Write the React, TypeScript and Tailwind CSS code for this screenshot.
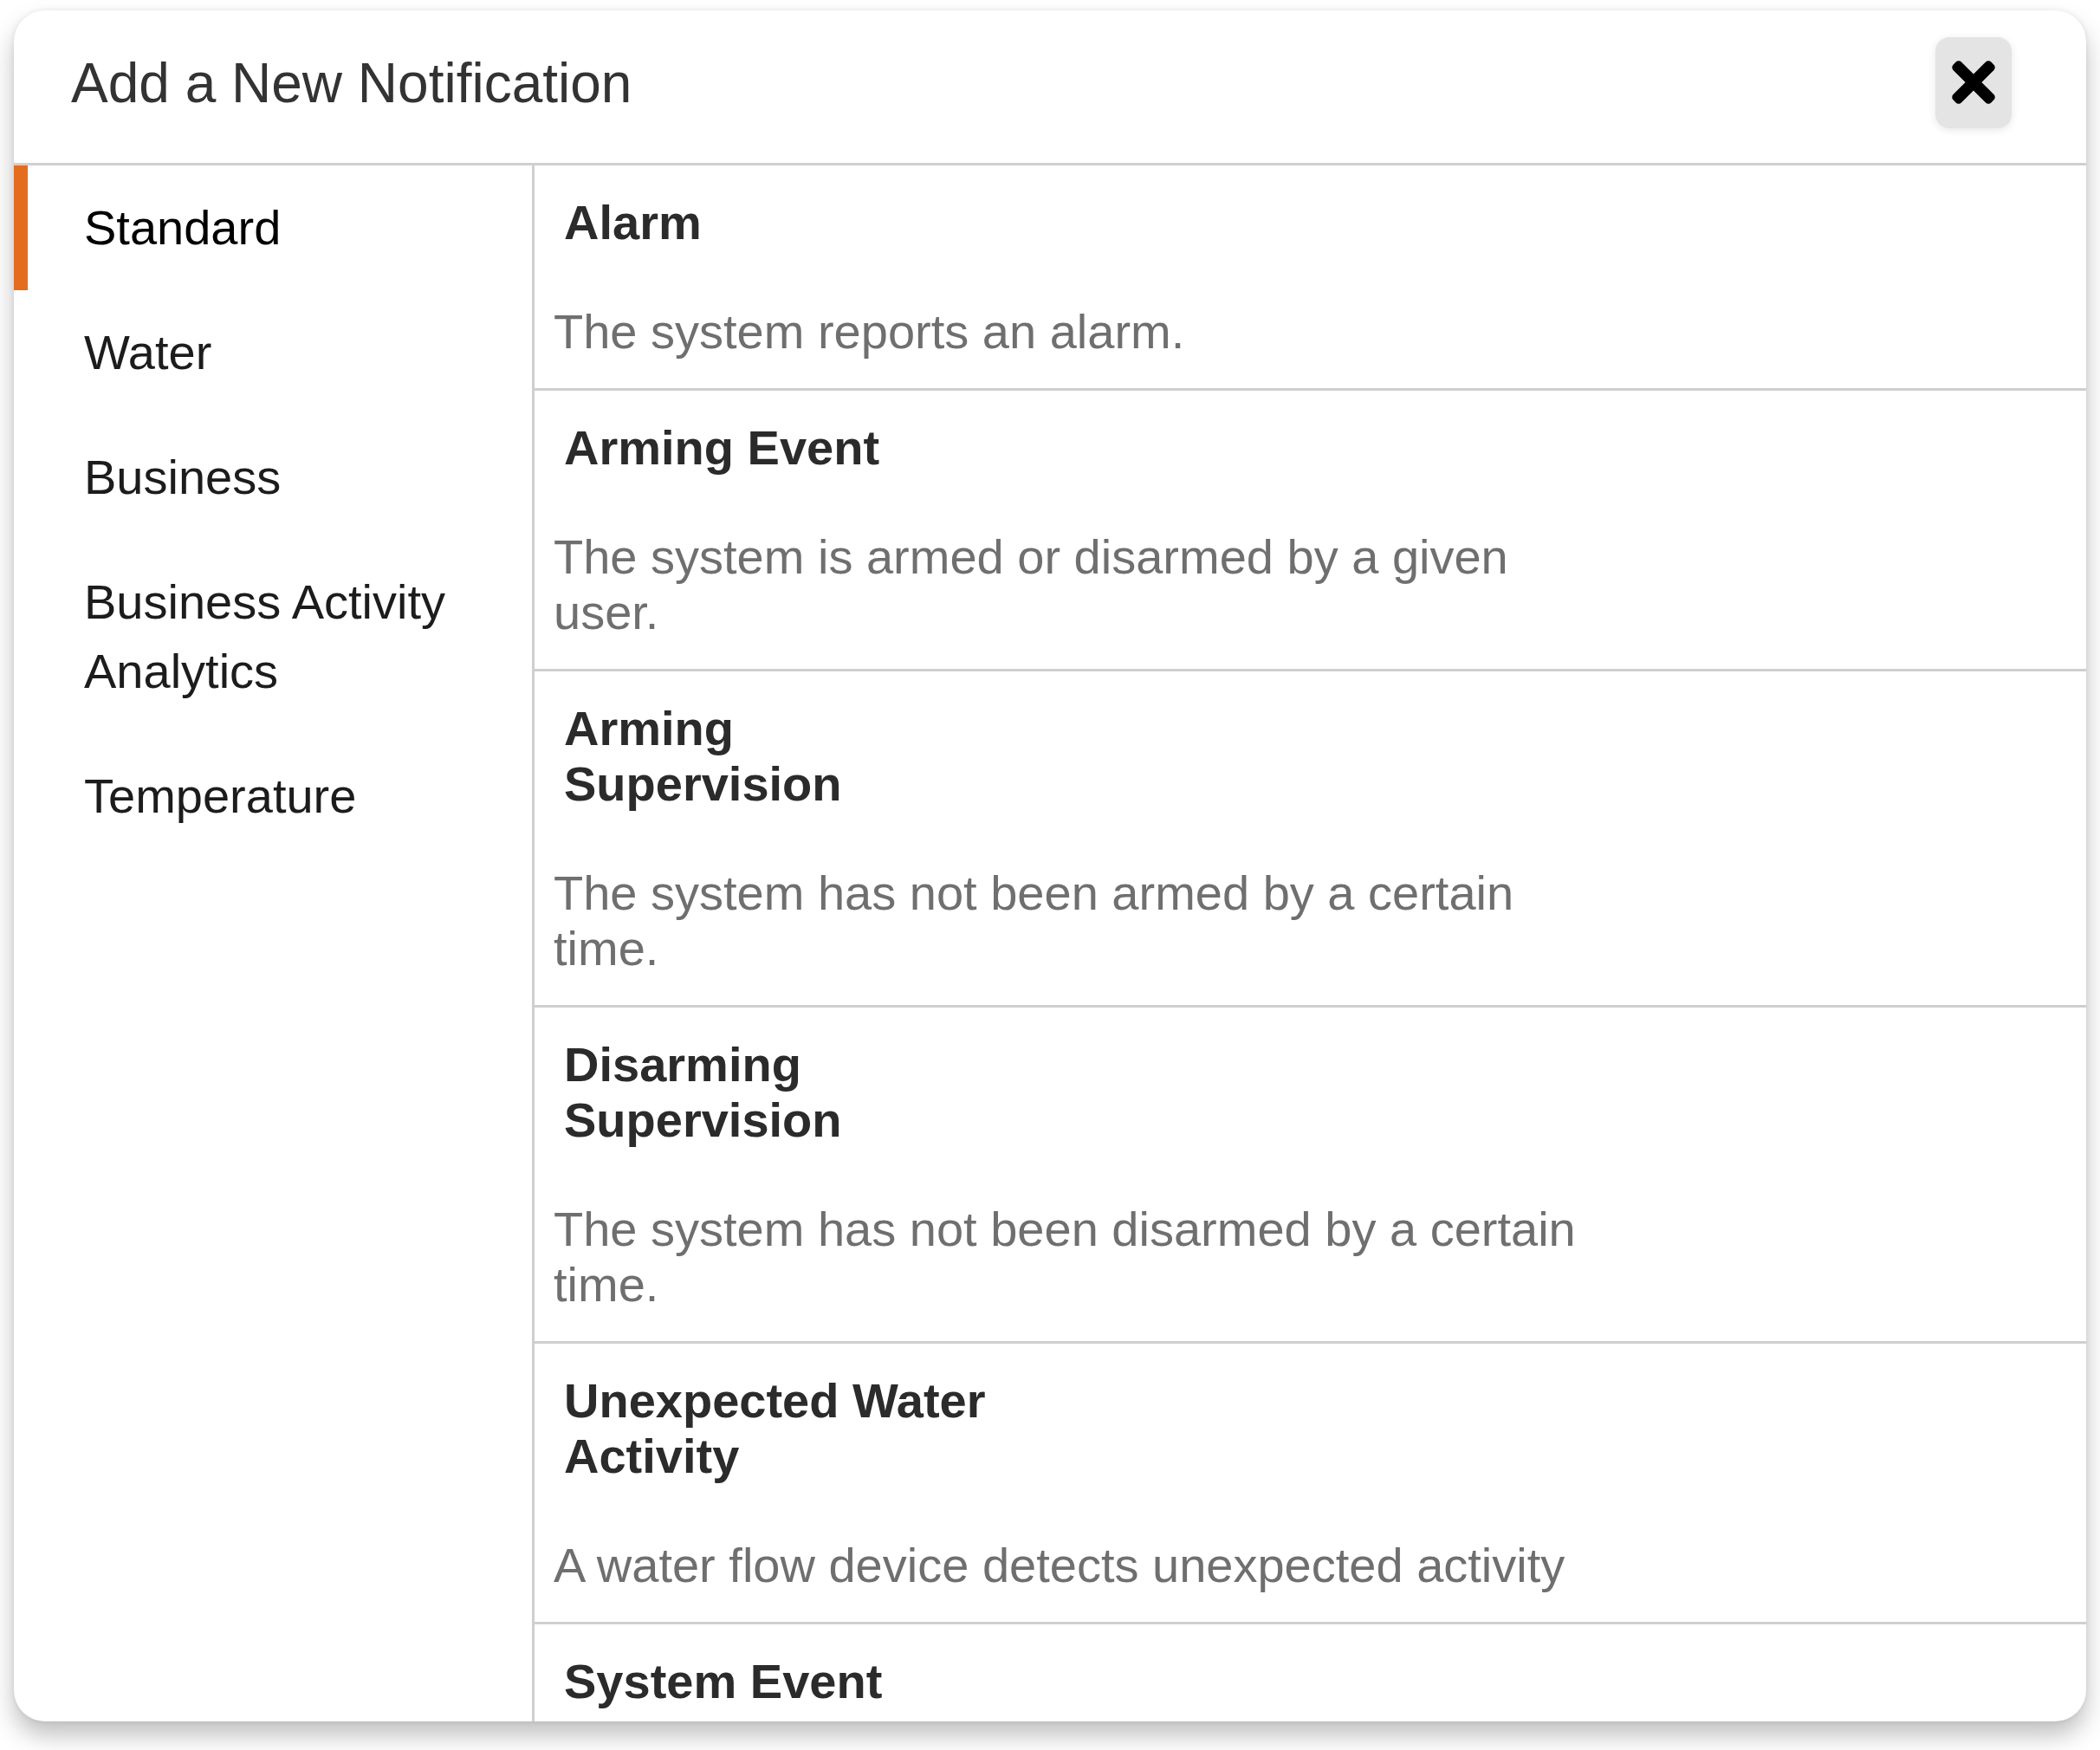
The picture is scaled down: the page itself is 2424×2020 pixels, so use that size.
import React from "react";
import { FaTimes } from "react-icons/fa";

const categories = [
  "Standard",
  "Water",
  "Business",
  "Business Activity Analytics",
  "Temperature",
];

const items = [
  { title: "Alarm", desc: "The system reports an alarm." },
  { title: "Arming Event", desc: "The system is armed or disarmed by a given user." },
  { title: "Arming Supervision", desc: "The system has not been armed by a certain time." },
  { title: "Disarming Supervision", desc: "The system has not been disarmed by a certain time." },
  { title: "Unexpected Water Activity", desc: "A water flow device detects unexpected activity" },
  { title: "System Event", desc: "The system reports a system event." },
];

export default function App() {
  return (
    <div
      className="w-[2424px] h-[2020px] bg-white pl-[16px] pt-[12px]"
      style={{ fontFamily: '"Liberation Sans", Arial, Helvetica, sans-serif' }}
    >
      <div className="w-[2392px] h-[1975px] bg-white rounded-[36px] overflow-hidden flex flex-col shadow-[0_16px_28px_rgba(0,0,0,0.25),0_0_6px_rgba(0,0,0,0.08)]">
        {/* Header */}
        <div className="h-[176px] shrink-0 flex items-center justify-between pl-[66px] pr-[86px] border-b-[3px] border-[#cfcfcf] box-content">
          <h1 className="text-[64px] leading-[76px] text-[#333333] font-normal -mt-[8px]">
            Add a New Notification
          </h1>
          <button className="w-[88px] h-[105px] rounded-[16px] bg-[#e4e4e4] flex items-center justify-center shadow-[0_2px_10px_rgba(0,0,0,0.10)] -mt-[10px]">
            <FaTimes className="w-[72px] h-[72px] text-black" />
          </button>
        </div>

        {/* Body */}
        <div className="flex flex-1 min-h-0">
          {/* Sidebar */}
          <div className="w-[601px] shrink-0 border-r-[3px] border-[#cfcfcf]">
            {categories.map((c, i) => (
              <div key={c} className="relative pl-[81px] pr-[40px] py-[32px]">
                {i === 0 && (
                  <div className="absolute left-0 top-0 bottom-0 w-[16px] bg-[#e46c1e]" />
                )}
                <span
                  className={
                    "block text-[56px] leading-[80px] " +
                    (i === 0 ? "text-black" : "text-[#1c1c1c]")
                  }
                >
                  {i === 3 ? (
                    <>
                      Business Activity
                      <br />
                      Analytics
                    </>
                  ) : (
                    c
                  )}
                </span>
              </div>
            ))}
          </div>

          {/* List */}
          <div className="flex-1 min-w-0 overflow-hidden">
            {items.map((it) => (
              <div
                key={it.title}
                className="pl-[22px] pt-[34px] pb-[33px] border-b-[3px] border-[#cfcfcf]"
              >
                <div className="ml-[12px] max-w-[515px] text-[56px] leading-[64px] font-bold text-[#2b2b2b]">
                  {it.title}
                </div>
                <div className="mt-[62px] max-w-[1200px] text-[56px] leading-[64px] text-[#6f6f6f]">
                  {it.desc}
                </div>
              </div>
            ))}
          </div>
        </div>
      </div>
    </div>
  );
}
